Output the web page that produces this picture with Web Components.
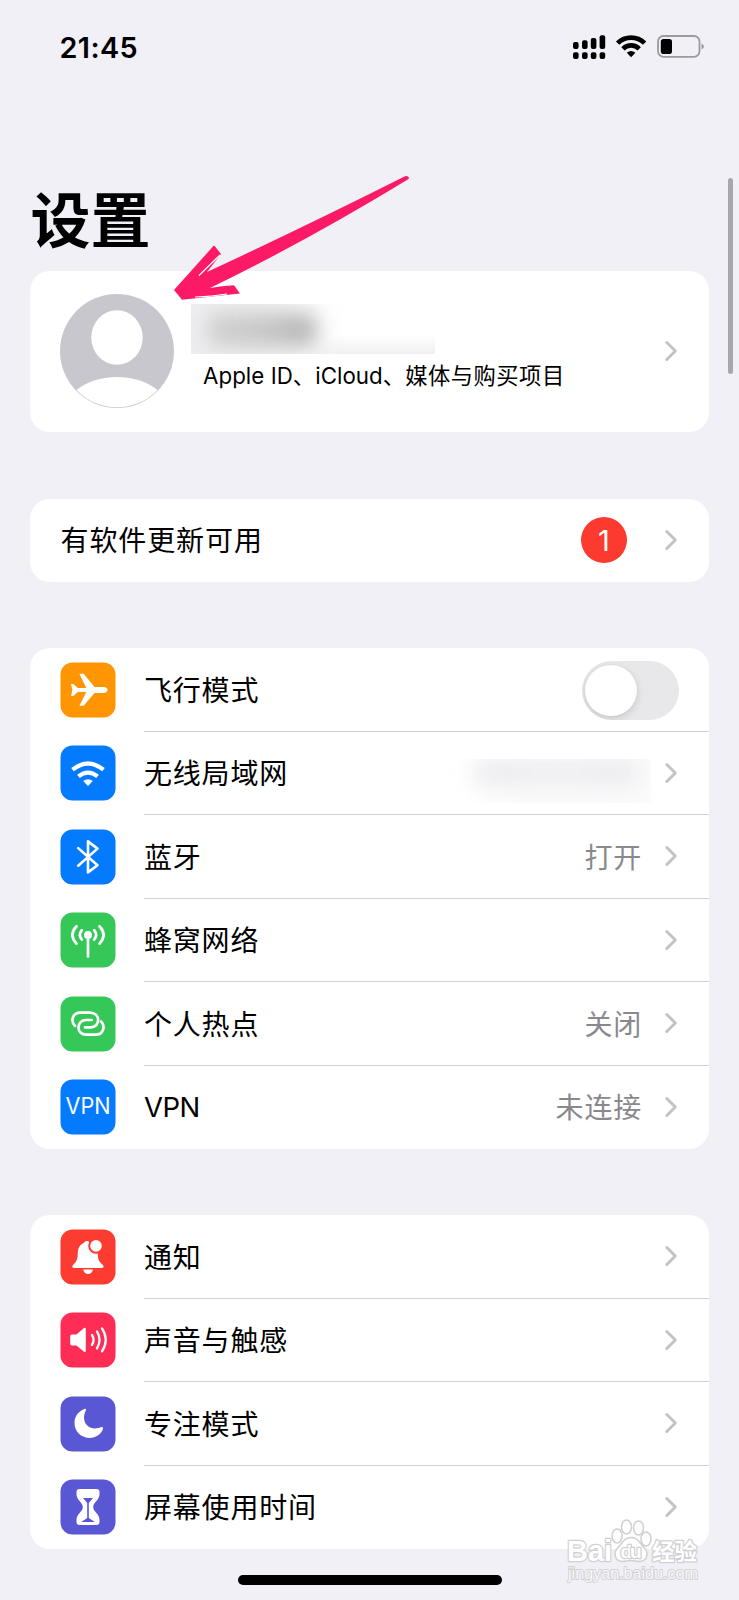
<!DOCTYPE html>
<html lang="zh-CN">
<head>
<meta charset="utf-8">
<title>设置</title>
<style>
body{margin:0;background:#f1f0f6;font-family:Inter,"Noto Sans CJK SC",sans-serif;color:#000;overflow:hidden}
</style>
</head>
<body>
<settings-screen></settings-screen>
<script>
const define=(name,html)=>{
  const t=document.createElement('template');
  t.innerHTML=html;
  customElements.define(name,class extends HTMLElement{
    constructor(){super();this.attachShadow({mode:'open'}).append(t.content.cloneNode(true));}
  });
};

define('status-bar',`<style>
:host{display:flex;height:94px;box-sizing:border-box;padding:0 35px 0 59.500px;justify-content:space-between;align-items:center}
.time{font-size:28.8px;font-weight:600;letter-spacing:.4px;line-height:40px;padding-top:2px}
svg{display:block}
</style><span class="time">21:45</span>
<svg width="132" height="28" viewBox="572 33 132 28">
<g><rect x="573" y="42" width="5.6" height="7" rx="2"/><rect x="582" y="40.3" width="5.6" height="8.7" rx="2"/><rect x="590.8" y="38" width="5.6" height="11" rx="2"/><rect x="599.6" y="35.2" width="5.6" height="13.8" rx="2"/>
<rect x="573" y="52.2" width="5.6" height="6.8" rx="2"/><rect x="582" y="52.2" width="5.6" height="6.8" rx="2"/><rect x="590.8" y="52.2" width="5.6" height="6.8" rx="2"/><rect x="599.6" y="52.2" width="5.6" height="6.8" rx="2"/></g>
<g fill="none" stroke="#000" stroke-width="4.7"><path d="M617.6 43.2a19 19 0 0 1 27 0"/><path d="M623 48.8a11.4 11.4 0 0 1 16.2 0"/></g>
<path d="M626.8 52.8Q631.100 49.400 635.400 52.800L631.1 57.3Z"/>
<rect x="658" y="36" width="41.500" height="20.800" rx="5.500" fill="none" stroke="#9b9b9f" stroke-width="1.800"/>
<path d="M701.500 43.500q2.500 1.300 2.500 3t-2.500 3z" fill="#9b9b9f"/>
<rect x="660.800" y="39" width="11.200" height="15" rx="2.800"/>
</svg>`);

define('chevron-icon',`<style>:host{display:block;width:14px;height:22px}svg{display:block}</style>
<svg width="14" height="22" viewBox="0 0 14 22"><path d="M2.800 2.500 11.300 11 2.800 19.500" fill="none" stroke="#c3c3c6" stroke-width="3" stroke-linecap="round" stroke-linejoin="round"/></svg>`);

define('settings-group',`<style>
:host{display:flex;flex-direction:column;margin:0 30px;background:#fff;border-radius:20px;overflow:hidden}
</style><slot></slot>`);

define('profile-card',`<style>
:host{display:flex;height:161px;align-items:center;padding:0 31px 2px 30px;background:#fff;border-radius:20px;margin:0 30px;box-sizing:border-box}
.avatar{display:block;width:114px;height:114px;margin-top:1px}
.info{flex:1;margin-left:17px;padding-top:1px;height:95px;display:flex;flex-direction:column}
.name{width:244px;height:50px;overflow:hidden;background:
 linear-gradient(95deg,#eeeef1 0,#f0f0f0 28%,rgba(250,250,250,.7) 48%,transparent 62%),
 linear-gradient(#fff 60%,#f0f0f0)}
.name i{display:block;width:110px;height:34px;margin:9px 0 0 16px;border-radius:12px;background:linear-gradient(90deg,#d0d0d0,#c8c8c8 50%,#b2b2b2);filter:blur(10px)}
.sub{font-size:22.300px;line-height:30px;margin:7px 0 0 12px;white-space:nowrap;letter-spacing:.05px}
::slotted(span){letter-spacing:.5px}
</style>
<svg class="avatar" viewBox="0 0 114 114"><defs><clipPath id="c"><circle cx="57" cy="57" r="56.300"/></clipPath></defs><circle cx="57" cy="57" r="57" fill="#c8c7ce"/><g clip-path="url(#c)" fill="#fff"><ellipse cx="57" cy="43.500" rx="25.700" ry="27.300"/><path d="M14 98.500C24 88 41 83 57 83s33 5 43 15.500V120H14z"/></g></svg>
<div class="info"><div class="name"><i></i></div><div class="sub"><slot></slot></div></div>
<chevron-icon></chevron-icon>`);

define('update-row',`<style>
:host{display:flex;height:83.500px;align-items:center;padding:0 31px 1px 30.500px;box-sizing:border-box;font-size:28px;letter-spacing:.9px}
.t{flex:1;margin-top:-1px}
.b{width:46px;height:46px;border-radius:50%;background:#fd3a30;color:#fff;text-align:center;line-height:47px;font-size:29px;font-weight:400;margin-right:37px;letter-spacing:0}
</style><span class="t"><slot></slot></span><span class="b"><slot name="badge"></slot></span><chevron-icon></chevron-icon>`);

define('toggle-switch',`<style>
:host{display:block;width:97px;height:59px;border-radius:30px;background:#e8e8ea;overflow:hidden;box-sizing:border-box;padding:4px 3.500px;margin:2px -.5px 0 0}
i{display:block;width:51.500px;height:51.500px;border-radius:50%;background:#fff;box-shadow:0 3px 9px rgba(0,0,0,.13),0 0 3px rgba(0,0,0,.05)}
</style><i></i>`);

define('private-value',`<style>
:host{display:block;width:204px;height:44px;margin:14px -9px 0 0;overflow:hidden;background:linear-gradient(90deg,rgba(251,251,251,0) 8%,#fbfbfb 40%)}
i{display:block;width:166px;height:24px;margin:2px 0 0 26px;border-radius:12px;background:linear-gradient(90deg,#e9e9ed,#eeeef1 50%,#e9e9ed);filter:blur(11px)}
</style><i></i>`);

const icons={
plane:['#ff9502','<path d="M10.500 21.500h2.400l4.400 4h8.500L18.900 11.300h4.200l11 13.200h9c2.600 0 4 1.500 4 3s-1.400 3-4 3h-9L23.100 43.300h-4.200l6.900-13.800h-8.500l-4.400 4h-2.400l1.400-6z" fill="#fff"/>'],
wifi:['#047aff','<g fill="none" stroke="#fff" stroke-width="4.200"><path d="M12 24.200q15.500-12.200 31 0"/><path d="M17.900 31q9.600-7.600 19.200 0"/></g><path d="M22.700 35.500q4.800-3.400 9.600 0L27.500 40.500z" fill="#fff"/>'],
bluetooth:['#047aff','<path d="M17.700 18.700 37 35.800 27.500 43V12L37 19.200 17.700 36.300" fill="none" stroke="#fff" stroke-width="2.600" stroke-linejoin="round" stroke-linecap="round"/>'],
antenna:['#36c759','<circle cx="27.500" cy="22.500" r="4" fill="#fff"/><g fill="none" stroke="#fff" stroke-width="2.700" stroke-linecap="round"><path d="M27.500 25v19"/><path d="M21.400 17.800q-4.100 4.700 0 9.400M33.600 17.800q4.100 4.700 0 9.400M16 13.800q-8.200 8.700 0 17.400M39 13.800q8.200 8.700 0 17.400"/></g>'],
link:['#36c759','<g fill="none" stroke="#fff" stroke-width="2.700" stroke-linecap="round"><path d="M14.500 29.500c-5-5.300-2-13.300 5.200-13.300h10c5 0 8 3.500 8 7.400 0 4.300-3.200 7.400-7.400 7.400h-5.800"/><path d="M40.500 25c5 5.300 2 13.300-5.200 13.300h-9.600c-5 0-7.700-3.500-7.700-7.300 0-4.300 3.200-7.400 7.400-7.400h5.800"/></g>'],
vpn:['#047aff','<text x="27.500" y="35" text-anchor="middle" textLength="45" lengthAdjust="spacingAndGlyphs" font-family="Inter,sans-serif" font-size="22.500" fill="#fff">VPN</text>'],
bell:['#fd3c31','<path d="M26 11.500c2 0 2 .7 4 1.500 6 2 7 6 7.300 12 .2 6 1.600 7.200 5 10.500 1.300 1.400 1 3-1 3H13.600c-2 0-2.500-1.500-1-3 3.200-3.300 4.400-5 4.600-10.500.2-6 1.300-9 6.300-11.700.7-.8 1.300-1.800 2.500-1.800zM22.700 40h9.800q-1 4.500-4.900 4.500T22.700 40z" fill="#fff"/><circle cx="35.500" cy="16.500" r="6.800" fill="#fff" stroke="#fd3c31" stroke-width="2"/>'],
sound:['#ff2d56','<path d="M9.700 24q0-2 2-2h4.200l7.700-6.300q1.700-1 1.700 1v21.600q0 2-1.700 1L15.900 33h-4.200q-2 0-2-2z" fill="#fff"/><g fill="none" stroke="#fff" stroke-width="2.300" stroke-linecap="round"><path d="M31.500 22.500q3 5 0 10M36.500 19q5 8.500 0 17M41.500 16q7.500 11.500 0 23"/></g>'],
moon:['#5957d3','<path d="M23.800 12.700c1.600-.8 2.200.2 1.400 1.700C20.500 24 26.500 32 34 32c3 0 4.300-.4 6.400-1.100 1.700-.6 2.500.1 2 1.700C40.500 38 35 41.500 29.500 41.500 20.500 41.500 14 35 14 26.500c0-6.200 4-11.700 9.800-13.800z" fill="#fff"/>'],
hourglass:['#5957d3','<path d="M19 9.500h17q3 0 3 3v2c0 6.500-6.300 8-6.300 13S39 34 39 40.500v2q0 3-3 3H19q-3 0-3-3v-2c0-6.500 6.300-8 6.300-13S16 21 16 14.500v-2q0-3 3-3z" fill="#fff"/><path d="M22.500 18.500h10l-4.200 5v15.200l6 3.800h-13.600l6-3.800V23.500z" fill="#5957d3"/>']
};
customElements.define('settings-row',class extends HTMLElement{
  constructor(){
    super();
    const [bg,art]=icons[this.getAttribute('icon')];
    const sw=this.hasAttribute('switch');
    this.attachShadow({mode:'open'}).innerHTML=`<style>
:host{display:flex;height:83.500px;align-items:stretch;padding-left:30px;box-sizing:border-box}
.icon{display:block;width:56px;height:56px;margin:13.500px 28px 0 0}
.body{flex:1;display:flex;align-items:center;padding:0 31px 0 0;border-bottom:1px solid #d0d0d2;font-size:28px;letter-spacing:.8px;line-height:40px}
:host([last]) .body{border-color:transparent}
.l{flex:1;white-space:nowrap;padding-top:3px}
:host([icon=vpn]) .l{font-size:27.500px;letter-spacing:-.5px;padding-top:1px}
.v{color:#89898d;margin-right:22px;white-space:nowrap;padding-top:3px}
</style><svg class="icon" viewBox="-.5 -.4 56 56"><rect width="55" height="55" rx="12" fill="${bg}"/>${art}</svg><div class="body"><span class="l"><slot></slot></span>${sw?'<toggle-switch></toggle-switch>':'<span class="v"><slot name="value"></slot></span><chevron-icon></chevron-icon>'}</div>`;
  }
});

define('pointer-arrow',`<style>:host{position:absolute;left:168px;top:170px}svg{display:block}</style>
<svg width="246" height="136" viewBox="168 170 246 136"><path d="M174 290 212.500 247q1.200-2 2.500-.500l6 7.500L207 272Q300 229 405 176.300q3-.8 4 1.500 0 1.500-2 2.200Q305 242 210 288q12-2 24-2.800l6 8.300L182 299.800z" fill="#fc1a67"/><path d="M220 255 199 275.500M195 297q17-.5 32-3" fill="none" stroke="#fff" stroke-width="1.200"/></svg>`);

define('water-mark',`<style>:host{position:absolute;left:564px;top:1516px}svg{display:block}text{paint-order:stroke;stroke-linejoin:round}</style>
<svg width="140" height="76" viewBox="564 1516 140 76"><g fill="#fff" stroke="#d0d0d3" stroke-width="1.500">
<text x="567" y="1561" font-family="Liberation Sans" font-weight="700" font-size="30" textLength="45" lengthAdjust="spacingAndGlyphs" stroke-width="2.500">Bai</text>
<ellipse cx="617" cy="1536" rx="5" ry="7"/><ellipse cx="626.500" cy="1527" rx="5" ry="7"/><ellipse cx="638.500" cy="1528" rx="5" ry="7"/><ellipse cx="646" cy="1539" rx="5" ry="7"/>
<path d="M631 1537.500c7 0 9 6 13 10 5 5 3.500 13.500-4 14-4 .2-5-1-9-1s-5 1.200-9 1c-7.500-.5-9-9-4-14 4-4 6-10 13-10z"/>
<text x="620.500" y="1558" font-family="Liberation Sans" font-weight="700" font-size="19" textLength="21" fill="#fff" stroke-width="2.500">du</text>
<text x="652" y="1560" font-family="Noto Sans CJK SC" font-weight="700" font-size="22.500" stroke-width="2.500">经验</text>
<text x="568" y="1579" font-family="Liberation Sans" font-size="16" textLength="130" lengthAdjust="spacingAndGlyphs" fill="#f8f8fa" stroke-width="1.800">jingyan.baidu.com</text></g></svg>`);

define('settings-screen',`<style>
:host{display:block;position:relative;width:739px;height:1600px;overflow:hidden;background:#f1f0f6}
h1{margin:0;height:92px;padding:85px 0 0 30.500px;font-size:60px;line-height:84px;font-weight:700}
main{display:flex;flex-direction:column}
.u{margin-top:66.500px}.g{margin-top:66px}.h{margin-top:66px}
.scroll{position:absolute;right:6px;top:178px;width:5.500px;height:196px;border-radius:3px;background:#a8a7ad}
.home{position:absolute;left:238px;top:1575px;width:264px;height:10px;border-radius:5px;background:#000}
</style>
<status-bar></status-bar>
<main><h1>设置</h1>
<profile-card>Apple ID、iCloud、<span>媒体与购买项目</span></profile-card>
<settings-group class="u"><update-row>有软件更新可用<span slot="badge">1</span></update-row></settings-group>
<settings-group class="g">
<settings-row icon="plane" switch>飞行模式</settings-row>
<settings-row icon="wifi">无线局域网<private-value slot="value"></private-value></settings-row>
<settings-row icon="bluetooth">蓝牙<span slot="value">打开</span></settings-row>
<settings-row icon="antenna">蜂窝网络</settings-row>
<settings-row icon="link">个人热点<span slot="value">关闭</span></settings-row>
<settings-row icon="vpn" last>VPN<span slot="value">未连接</span></settings-row>
</settings-group>
<settings-group class="h">
<settings-row icon="bell">通知</settings-row>
<settings-row icon="sound">声音与触感</settings-row>
<settings-row icon="moon">专注模式</settings-row>
<settings-row icon="hourglass" last>屏幕使用时间</settings-row>
</settings-group></main>
<div class="scroll"></div><pointer-arrow></pointer-arrow><water-mark></water-mark><div class="home"></div>`);
</script>
</body>
</html>
